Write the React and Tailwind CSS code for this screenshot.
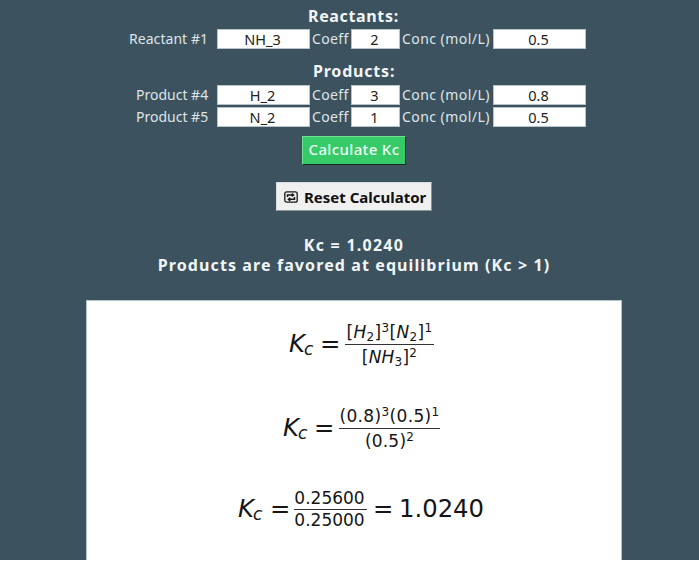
function Field({ className, children }) {
  return (
    <div className={`h-5 border border-[#b9c4ca] bg-white pr-[2px] text-center text-[14.5px] leading-[18px] text-[#222] ${className}`}>
      {children}
    </div>
  );
}

function SpeciesRow({ label, labelClass, formula, coeff, conc }) {
  return (
    <div className="flex h-5 items-center text-[14px] leading-5 text-[#dfe5e8]">
      <div className={`w-[87px] whitespace-nowrap ${labelClass}`}>{label}</div>
      <Field className="ml-[4px] w-[93px]">{formula}</Field>
      <div className="w-[41px] pl-[2px] tracking-[0.35px] whitespace-nowrap">Coeff</div>
      <Field className="w-[49px]">{coeff}</Field>
      <div className="w-[93px] pl-[2px] tracking-[0.45px] whitespace-nowrap">Conc (mol/L)</div>
      <Field className="w-[93px]">{conc}</Field>
    </div>
  );
}

function Kc() {
  return (
    <span className="flex h-[30px] w-[29px] shrink-0 items-start">
      <i className="text-[24.3px] leading-[30px]">K</i>
      <i className="mt-[8px] ml-[-1px] text-[17px] leading-[24px]">c</i>
    </span>
  );
}

function Sub({ children }) {
  return <span className="align-[-3px] text-[12px] leading-none">{children}</span>;
}

function Sup({ children }) {
  return <span className="align-[6px] text-[12px] leading-none">{children}</span>;
}

function Fraction({ top, bottom, className, rowClass = "h-[24px] leading-[24px]" }) {
  return (
    <div className={`flex shrink-0 flex-col text-center text-[17px] whitespace-nowrap ${className}`}>
      <div className={rowClass}>{top}</div>
      <div className="h-px bg-[#333]" />
      <div className={rowClass}>{bottom}</div>
    </div>
  );
}

export default function App() {
  return (
    <main className="flex h-[560px] w-[699px] flex-col overflow-hidden bg-[#3c525f] font-['Noto_Sans',sans-serif]">
      <h2 className="mt-[4px] ml-[308px] h-6 shrink-0 text-[16px] leading-6 font-bold tracking-[0.65px] whitespace-nowrap text-[#f2f5f6]">Reactants:</h2>
      <div className="mt-[1px] ml-[126px]">
        <SpeciesRow label="Reactant #1" labelClass="pl-[3px] tracking-[0.05px]" formula="NH_3" coeff="2" conc="0.5" />
      </div>
      <h2 className="mt-[10px] ml-[313px] h-6 shrink-0 text-[16px] leading-6 font-bold tracking-[0.8px] whitespace-nowrap text-[#f2f5f6]">Products:</h2>
      <div className="mt-[2px] ml-[126px] flex flex-col gap-[2px]">
        <SpeciesRow label="Product #4" labelClass="pl-[10px]" formula="H_2" coeff="3" conc="0.8" />
        <SpeciesRow label="Product #5" labelClass="pl-[10px]" formula="N_2" coeff="1" conc="0.5" />
      </div>

      <button className="mt-[9px] ml-[302px] h-[29px] w-[104px] shrink-0 border border-t-[#6be093] border-r-[#112e20] border-b-[#112e20] border-l-[#6be093] bg-[#36cb68] pb-[2px] text-[15px] leading-[25px] font-medium tracking-[0.35px] whitespace-nowrap text-[#eefff4]">
        Calculate Kc
      </button>
      <button className="mt-[17px] ml-[276px] flex h-[29px] w-[156px] shrink-0 items-center border border-t-[#d9dee1] border-r-[#8a9499] border-b-[#8a9499] border-l-[#d9dee1] bg-[#f0f0f0] pl-[7px] text-[#111]">
        <svg className="mt-px mr-[6px] h-[12px] w-[14px] shrink-0" viewBox="0 0 14 12" fill="none" stroke="#181818">
          <rect x="0.8" y="0.8" width="12.4" height="10.4" rx="2" strokeWidth="1.3" />
          <path d="M3.5 6V4h6M7.8 2.5 9.6 4 7.8 5.5M10.5 6v2.3h-6M6.2 6.8 4.4 8.3 6.2 9.8" strokeWidth="1.5" />
        </svg>
        <span className="text-[15px] leading-6 font-bold whitespace-nowrap">Reset Calculator</span>
      </button>

      <div className="mt-[24px] flex h-[42px] w-[708px] shrink-0 flex-col items-center text-[16px] leading-5 font-bold whitespace-nowrap text-[#f2f5f6]">
        <p className="tracking-[1.25px]">Kc = 1.0240</p>
        <p className="tracking-[1.1px]">Products are favored at equilibrium (Kc &gt; 1)</p>
      </div>

      <section className="mt-[23px] ml-[86px] flex h-[260px] w-[536px] shrink-0 flex-col border border-b-0 border-[#b5c3cb] bg-white font-['DejaVu_Sans',sans-serif] text-[24.3px] text-[#151515]">
        <div className="mt-[18px] ml-[202px] flex h-[50px] shrink-0 items-center">
          <Kc />
          <span className="ml-[2px] w-[25px]">=</span>
          <Fraction
            className="w-[89px]"
            top={<span className="tracking-[0.35px]">[<i>H</i><Sub>2</Sub>]<Sup>3</Sup>[<i>N</i><Sub>2</Sub>]<Sup>1</Sup></span>}
            bottom={<span className="tracking-[0.2px]">[<i>NH</i><Sub>3</Sub>]<Sup>2</Sup></span>}
          />
        </div>
        <div className="mt-[34px] ml-[196px] flex h-[50px] shrink-0 items-center">
          <Kc />
          <span className="ml-[2px] w-[25px]">=</span>
          <Fraction
            className="w-[101px]"
            top={<span className="tracking-[0.35px]">(0.8)<Sup>3</Sup>(0.5)<Sup>1</Sup></span>}
            bottom={<span className="tracking-[0.2px]">(0.5)<Sup>2</Sup></span>}
          />
        </div>
        <div className="mt-[31px] ml-[151px] flex h-[50px] shrink-0 items-center">
          <Kc />
          <span className="ml-[3px] w-[24px]">=</span>
          <Fraction className="w-[73px]" rowClass="h-[21px] leading-[21px] pr-[2px]" top="0.25600" bottom="0.25000" />
          <span className="ml-[6px] w-[26px]">=</span>
          <span>1.0240</span>
        </div>
      </section>
    </main>
  );
}
